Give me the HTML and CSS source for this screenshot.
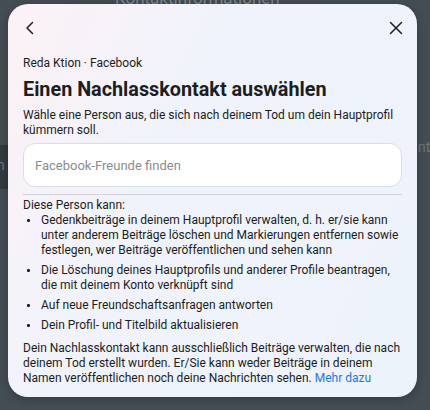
FILE: index.html
```html
<!DOCTYPE html>
<html lang="de">
<head>
<meta charset="utf-8">
<link rel="stylesheet" href="styles.css">
</head>
<body>
<div class="backdrop">
  <div class="bg-title">Kontaktinformationen</div>
  <div class="bg-band"><span class="bg-left">n</span></div>
  <span class="bg-right">nt</span>
</div>
<div class="modal">
  <div class="header">
    <button class="icon-btn" aria-label="Zurück">
      <svg width="16" height="16" viewBox="0 0 16 16"><path d="M10.5 2.5 L5 8 L10.5 13.5" fill="none" stroke="#1c1e21" stroke-width="1.5" stroke-linecap="round" stroke-linejoin="round"/></svg>
    </button>
    <button class="icon-btn" aria-label="Schließen">
      <svg width="16" height="16" viewBox="0 0 16 16"><path d="M2.5 2.5 L13.5 13.5 M13.5 2.5 L2.5 13.5" fill="none" stroke="#1c1e21" stroke-width="1.5" stroke-linecap="round"/></svg>
    </button>
  </div>
  <div class="content">
    <div class="account">Reda Ktion · Facebook</div>
    <h1 class="title">Einen Nachlasskontakt auswählen</h1>
    <p class="intro">Wähle eine Person aus, die sich nach deinem Tod um dein Hauptprofil kümmern soll.</p>
    <div class="search">Facebook-Freunde finden</div>
    <div class="divider"></div>
    <p class="lead">Diese Person kann:</p>
    <ul class="list">
      <li>Gedenkbeiträge in deinem Hauptprofil verwalten, d. h. er/sie kann unter anderem Beiträge löschen und Markierungen entfernen sowie festlegen, wer Beiträge veröffentlichen und sehen kann</li>
      <li>Die Löschung deines Hauptprofils und anderer Profile beantragen, die mit deinem Konto verknüpft sind</li>
      <li>Auf neue Freundschaftsanfragen antworten</li>
      <li>Dein Profil- und Titelbild aktualisieren</li>
    </ul>
    <p class="note">Dein Nachlasskontakt kann ausschließlich Beiträge verwalten, die nach deinem Tod erstellt wurden. Er/Sie kann weder Beiträge in deinem Namen veröffentlichen noch deine Nachrichten sehen. <a class="link" href="#">Mehr dazu</a></p>
  </div>
</div>
</body>
</html>
```
FILE: styles.css
```css
* { box-sizing: border-box; }
html, body { margin: 0; height: 100%; }
body {
  background: #434d53;
  font-family: Roboto, "Noto Sans", "Liberation Sans", sans-serif;
  color: #1c1e21;
  padding: 4px 13px 13px 8px;
  position: relative;
  overflow: hidden;
}
.backdrop { position: absolute; inset: 0; z-index: 0; }
.bg-title {
  position: absolute; left: 115px; top: -12px;
  font-size: 17px; color: #7e878c;
}
.bg-band {
  position: absolute; left: 0; width: 20px; top: 145px; height: 44px;
  background: #323b40;
}
.bg-left { position: absolute; left: -3px; top: 12px; font-size: 14px; color: #6d777c; }
.bg-right { position: absolute; left: 418px; top: 139px; font-size: 14px; color: #6d777c; }
.modal {
  position: relative; z-index: 1;
  width: 409px;
  height: 393px;
  border-radius: 20px;
  background: linear-gradient(115deg, #fcf2f6 0%, #f1f3fb 35%, #edf3fb 100%);
  box-shadow: 0 2px 10px rgba(0,0,0,0.25);
  overflow: hidden;
}
.header {
  display: flex; justify-content: space-between; align-items: center;
  height: 48px; padding: 0 12px 0 13px;
}
.icon-btn {
  border: 0; background: none; padding: 0; width: 18px; height: 18px;
  display: flex; align-items: center; justify-content: center;
}
.content { padding: 3px 15px 0 15px; }
.account { font-size: 12px; line-height: 16px; }
.title { font-size: 19.8px; font-weight: 700; line-height: 26px; margin: 6px 0 0; }
.intro, .lead, .note { font-size: 12px; line-height: 15px; margin: 0; }
.intro { margin-top: 4.5px; }
.search {
  margin-top: 5.5px; height: 44px;
  border: 1px solid #dadde1; border-radius: 12px;
  background: #ffffff;
  display: flex; align-items: center; padding: 0 11px;
  font-size: 13px; color: #8a8d91;
}
.divider { height: 1px; background: #cfd3d8; margin-top: 6.5px; }
.lead { margin-top: 3px; }
.list { list-style: none; margin: 0; padding: 0 0 0 18px; }
.list li { font-size: 12px; line-height: 15px; position: relative; margin-bottom: 5px; }
.list li::before {
  content: ""; position: absolute; left: -14px; top: 6.5px;
  width: 2.5px; height: 2.5px; border-radius: 50%; background: #1c1e21;
}
.note { margin-top: 8px; }
.link { color: #1877f2; text-decoration: none; }
```
